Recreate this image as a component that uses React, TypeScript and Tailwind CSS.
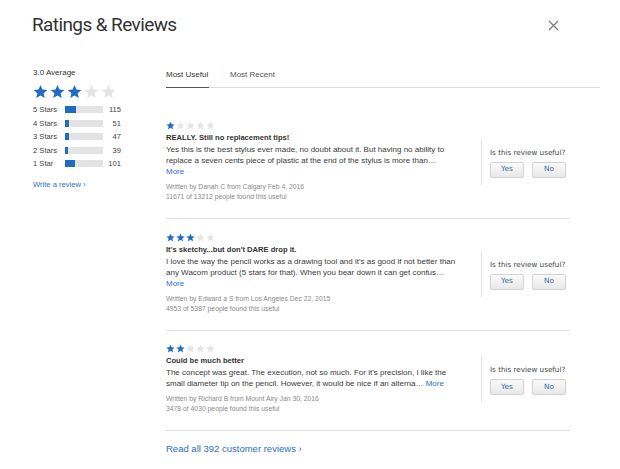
import React from "react";

const BLUE = "#1f6cc0";

function Star({ size, filled }: { size: number; filled: boolean }) {
  return (
    <svg width={size} height={size} viewBox="0 0 24 24" className="block">
      <path
        d="M12 1.5l3.09 7.26 7.91.66-6 5.2 1.8 7.73L12 18.27 5.2 22.35 7 14.62l-6-5.2 7.91-.66z"
        fill={filled ? BLUE : "#e4e4e4"}
      />
    </svg>
  );
}

function Stars({ n, size, gap }: { n: number; size: number; gap: string }) {
  return (
    <div className={`flex ${gap}`}>
      {[0, 1, 2, 3, 4].map((i) => (
        <Star key={i} size={size} filled={i < n} />
      ))}
    </div>
  );
}

const bars = [
  { label: "5 Stars", w: 11, count: 115 },
  { label: "4 Stars", w: 4, count: 51 },
  { label: "3 Stars", w: 4, count: 47 },
  { label: "2 Stars", w: 3, count: 39 },
  { label: "1 Star", w: 10, count: 101 },
];

function Useful() {
  return (
    <div className="border-l border-[#e2e2e2] pl-[8px] pt-[9px] pb-[7px] w-[89px] shrink-0 ml-[8px]">
      <div className="text-[7.2px] leading-[10px] text-[#444] font-['DejaVu_Sans',sans-serif] whitespace-nowrap">
        Is this review useful?
      </div>
      <div className="flex gap-[8px] mt-[4px]">
        <button className="w-[34px] h-[16px] rounded-[2px] border border-[#d2d2d2] bg-gradient-to-b from-[#fafafa] to-[#e8e8e8] text-[7.3px] text-[#2d67ad] font-['DejaVu_Sans',sans-serif]">
          Yes
        </button>
        <button className="w-[34px] h-[16px] rounded-[2px] border border-[#d2d2d2] bg-gradient-to-b from-[#fafafa] to-[#e8e8e8] text-[7.3px] text-[#2d67ad] font-['DejaVu_Sans',sans-serif]">
          No
        </button>
      </div>
    </div>
  );
}

function Review({
  stars,
  title,
  lines,
  inlineMore,
  written,
  found,
  pt,
}: {
  stars: number;
  title: string;
  lines: string[];
  inlineMore?: boolean;
  written: string;
  found: string;
  pt: string;
}) {
  return (
    <div className={`flex items-center border-b border-[#dedede] ${pt} pb-[16px] w-[404px]`}>
      <div className="w-[307px] shrink-0">
        <Stars n={stars} size={9} gap="gap-[1px]" />
        <div className="mt-[2px] text-[7.6px] leading-[12px] font-bold text-[#333]">{title}</div>
        <div className="text-[8px] leading-[11px] text-[#3a3a3a]">
          {lines.map((l, i) => (
            <div key={i} className="whitespace-nowrap">
              {l}
              {inlineMore && i === lines.length - 1 && <span className="text-[#2d6fbf]"> More</span>}
            </div>
          ))}
          {!inlineMore && <div className="text-[#2d6fbf]">More</div>}
        </div>
        <div className="mt-[5px] text-[6.8px] leading-[10px] text-[#8a8a8a]">
          <div>{written}</div>
          <div>{found}</div>
        </div>
      </div>
      <Useful />
    </div>
  );
}

export default function App() {
  return (
    <div className="w-[620px] h-[469px] bg-white overflow-hidden font-['Liberation_Sans',Arial,sans-serif] text-[#333]">
      <div className="flex items-start justify-between pl-[32px] pr-[61px] pt-[12px]">
        <h1 className="text-[19px] leading-[26px] tracking-[-0.6px] text-[#333] font-['Roboto',sans-serif]">
          Ratings &amp; Reviews
        </h1>
        <svg width="11" height="11" viewBox="0 0 11 11" className="mt-[8px]">
          <path d="M1 1L10 10M10 1L1 10" stroke="#7a7a7a" strokeWidth="1.2" />
        </svg>
      </div>

      <div className="flex mt-[31px]">
        <div className="w-[166px] shrink-0 pl-[33px]">
          <div className="text-[8px] leading-[11px] text-[#333] -mt-[2px]">3.0 Average</div>
          <div className="mt-[6px]">
            <Stars n={3} size={15} gap="gap-[2px]" />
          </div>
          <div className="mt-[4px] flex flex-col">
            {bars.map((b) => (
              <div key={b.label} className="flex items-center h-[13.5px] text-[7.6px] text-[#444]">
                <span className="w-[32px]">{b.label}</span>
                <div className="w-[38px] h-[7px] bg-[#e3e3e3]">
                  <div className="h-full bg-[#1f6cc0]" style={{ width: b.w }} />
                </div>
                <span className="w-[18px] text-right">{b.count}</span>
              </div>
            ))}
          </div>
          <div className="mt-[8px] text-[7.6px] text-[#2d6fbf]">Write a review ›</div>
        </div>

        <div className="flex-1">
          <div className="flex w-[434px] border-b border-[#dcdcdc] text-[8px] leading-[10px] pt-[1px]">
            <div className="pb-[7px] border-b-[1.5px] border-[#555] -mb-px w-[43px] whitespace-nowrap text-[#333]">
              Most Useful
            </div>
            <div className="ml-[21px] pb-[7px] text-[#555]">Most Recent</div>
          </div>

          <Review
            pt="pt-[33px]"
            stars={1}
            title="REALLY. Still no replacement tips!"
            lines={[
              "Yes this is the best stylus ever made, no doubt about it. But having no ability to",
              "replace a seven cents piece of plastic at the end of the stylus is more than…",
            ]}
            written="Written by Danah C from Calgary Feb 4, 2016"
            found="11671 of 13212 people found this useful"
          />
          <Review
            pt="pt-[14px]"
            stars={3}
            title="It's sketchy...but don't DARE drop it."
            lines={[
              "I love the way the pencil works as a drawing tool and it's as good if not better than",
              "any Wacom product (5 stars for that). When you bear down it can get confus…",
            ]}
            written="Written by Edward a S from Los Angeles Dec 22, 2015"
            found="4953 of 5387 people found this useful"
          />
          <Review
            pt="pt-[13px]"
            stars={2}
            title="Could be much better"
            lines={[
              "The concept was great. The execution, not so much. For it's precision, I like the",
              "small diameter tip on the pencil. However, it would be nice if an alterna…",
            ]}
            inlineMore
            written="Written by Richard B from Mount Airy Jan 30, 2016"
            found="3478 of 4030 people found this useful"
          />

          <div className="mt-[11px] text-[9.5px] leading-[14px] text-[#2d6fbf]">Read all 392 customer reviews ›</div>
        </div>
      </div>
    </div>
  );
}
